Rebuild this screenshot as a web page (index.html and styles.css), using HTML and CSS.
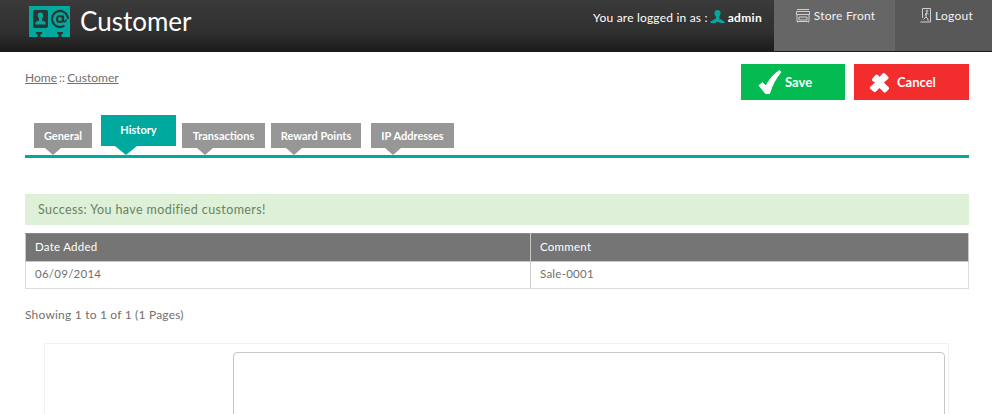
FILE: index.html
```html
<!DOCTYPE html>
<html lang="en">
<head>
<meta charset="utf-8">
<title>Customer</title>
<link rel="stylesheet" href="styles.css">
</head>
<body>
<header class="topbar">
  <div class="brand">
    <svg class="brand-icon" width="41" height="31" viewBox="0 0 41 31">
      <rect width="41" height="31" fill="#00a99d"/>
      <rect x="4" y="4" width="15" height="18" rx="2" fill="#2d3434"/>
      <path d="M11.500 6.500a2.700 2.700 0 0 1 2.700 2.700c0 1.500-.7 2.600-1.200 3.200v1.800c0 .6 3.500 1 3.500 2.600v1.700H6.500v-1.700c0-1.600 3.500-2 3.500-2.600v-1.800c-.5-.6-1.200-1.700-1.200-3.200a2.700 2.700 0 0 1 2.700-2.700z" fill="#00a99d"/>
      <circle cx="31" cy="13" r="8" fill="none" stroke="#2d3434" stroke-width="2.200" stroke-dasharray="40 8" transform="rotate(70 31 13)"/>
      <circle cx="31" cy="13" r="3" fill="none" stroke="#2d3434" stroke-width="2"/>
      <path d="M34.200 9.500v4.600c0 2 2.800 2 2.800-.6" fill="none" stroke="#2d3434" stroke-width="1.800"/>
      <path d="M7 26h6v2h-1.500v3h-3v-3H7zM28 26h6v2h-1.500v3h-3v-3H28z" fill="#2d3434"/>
    </svg>
    <h1 class="brand-title">Customer</h1>
  </div>
  <div class="userbar">
    <span class="logged">You are logged in as :</span>
    <svg class="user-icon" width="15" height="14" viewBox="0 0 15 14">
      <path d="M7.500 0a3 3 0 0 1 3 3.200c0 1.600-.9 3-1.500 3.500v1.600c1.500.9 3.600 2.400 5.600 3.200v1.500h-4.400L7.500 11.800l-2.700 1.200H.4v-1.500c2-.8 4.100-2.300 5.600-3.200V6.700c-.6-.5-1.500-1.900-1.500-3.500A3 3 0 0 1 7.500 0z" fill="#00a99d"/>
    </svg>
    <span class="username">admin</span>
  </div>
  <a class="navlink navlink-store" href="#">
    <svg width="14" height="15" viewBox="0 0 14 15" fill="none" stroke="#d0d0d0" stroke-width="1">
      <path d="M1 1.500h12M.5 3.500h13v3H.5zM1 6.500v7h12v-7M3 9h8v3H3zM1.500 13.500v1M12.500 13.500v1"/>
    </svg>
    Store Front
  </a>
  <a class="navlink navlink-logout" href="#">
    <svg width="11" height="15" viewBox="0 0 11 15" fill="none" stroke="#d0d0d0" stroke-width="1">
      <path d="M2.500 10V.5h8v13.500H.5M5 7.500l1.500-3 2 1.500M6.500 4.500L6 9l-2.500 2.500M6 9l2 2v2"/>
      <circle cx="7" cy="2.800" r=".8"/>
    </svg>
    Logout
  </a>
</header>

<main class="content">
  <div class="toprow">
    <nav class="crumbs"><a href="#">Home</a> :: <a href="#">Customer</a></nav>
    <div class="actions">
      <a class="btn btn-save" href="#">
        <svg width="24" height="24" viewBox="0 0 24 24"><path d="M1 15.500l3.500-3 3.500 3.500C11 10 15.500 4 21.500 0.500L23 2C18 8 14 15 11.500 23.500H7.500z" fill="#fff" stroke="#fff" stroke-linejoin="round"/></svg>
        Save
      </a>
      <a class="btn btn-cancel" href="#">
        <svg width="21" height="21" viewBox="0 0 21 21"><path d="M3.500 6.500l3-3.500a1.800 1.800 0 0 1 2.500 0l1.500 2 3-3.500a1.800 1.800 0 0 1 2.500 0l3 3a1.800 1.800 0 0 1 0 2.500L15 10.500l4.500 4.500a1.800 1.800 0 0 1 0 2.500l-2.500 2.500a1.800 1.800 0 0 1-2.500 0l-4-4-3.500 3.500a1.800 1.800 0 0 1-2.500 0L1.500 17a1.800 1.800 0 0 1 0-2.500L6 10.500 3.500 9a1.800 1.800 0 0 1 0-2.500z" fill="#fff"/></svg>
        Cancel
      </a>
    </div>
  </div>

  <div class="tabs">
    <a class="tab tab-general" href="#">General</a>
    <a class="tab tab-active" href="#">History</a>
    <a class="tab tab-transactions" href="#">Transactions</a>
    <a class="tab tab-reward" href="#">Reward Points</a>
    <a class="tab tab-ip" href="#">IP Addresses</a>
  </div>

  <div class="alert">Success: You have modified customers!</div>

  <table class="history">
    <thead>
      <tr><th class="col-date">Date Added</th><th>Comment</th></tr>
    </thead>
    <tbody>
      <tr><td>06/09/2014</td><td>Sale-0001</td></tr>
    </tbody>
  </table>

  <p class="paging">Showing 1 to 1 of 1 (1 Pages)</p>

  <div class="panel">
    <textarea class="comment"></textarea>
  </div>
</main>
</body>
</html>
```
FILE: styles.css
```css
* { box-sizing: border-box; }
html, body { height: 414px; overflow: hidden; }
body {
  margin: 0;
  background: #fff;
  color: #707070;
  font-family: Lato, "Open Sans", sans-serif;
  font-size: 12px;
}
a { color: inherit; }

.topbar {
  display: flex;
  align-items: stretch;
  height: 52px;
  background: linear-gradient(#3a3a3a, #303030 60%, #1b1b1b);
  color: #fff;
}
.brand {
  display: flex;
  align-items: flex-start;
  padding: 6px 0 0 29px;
  gap: 10px;
}
.brand-icon { display: block; }
.brand-title {
  margin: 0;
  font-size: 26px;
  line-height: 31px;
  font-weight: 400;
}
.userbar {
  margin-left: auto;
  display: flex;
  align-items: center;
  height: 34px;
  padding-right: 12px;
  font-size: 12px;
}
.logged { letter-spacing: .2px; }
.user-icon { margin: 0 3px 0 2px; }
.username { font-weight: 700; letter-spacing: .3px; }
.navlink {
  display: flex;
  align-items: flex-start;
  justify-content: center;
  gap: 4px;
  padding-top: 8px;
  line-height: 15px;
  height: 51px;
  text-decoration: none;
  color: #f2f2f2;
  font-size: 12px;
  letter-spacing: .25px;
}
.navlink-store { width: 121px; padding-left: 2px; background: #666; }
.navlink-logout { width: 97px; padding-left: 6px; background: #585858; }

.content { padding: 0 23px 0 25px; }
.toprow {
  display: flex;
  justify-content: space-between;
  align-items: flex-start;
  padding-top: 12px;
}
.crumbs { padding-top: 6px; line-height: 15px; font-size: 12px; word-spacing: -1px; }
.actions { display: flex; gap: 9px; }
.btn {
  display: flex;
  align-items: center;
  height: 36px;
  color: #fff;
  font-size: 13px;
  font-weight: 700;
  text-decoration: none;
}
.btn-save { width: 104px; padding-left: 17px; gap: 3px; background: #03bb50; }
.btn-cancel { width: 115px; padding-left: 15px; gap: 7px; background: #f32c2e; }

.tabs {
  display: flex;
  align-items: flex-start;
  height: 43px;
  margin-top: 15px;
  padding-left: 9px;
  border-bottom: 3px solid #00a99d;
}
.tab {
  position: relative;
  display: block;
  height: 25px;
  margin-top: 8px;
  background: #979797;
  color: #fff;
  font-size: 11px;
  font-weight: 700;
  line-height: 25px;
  text-align: center;
  text-decoration: none;
}
.tab::after {
  content: "";
  position: absolute;
  left: 15px;
  top: 25px;
  border-style: solid;
  border-width: 7px 8px 0 8px;
  border-color: #979797 transparent transparent transparent;
}
.tab-general { width: 58px; }
.tab-general::after { left: 11px; }
.tab-active {
  width: 75px;
  height: 31px;
  margin: 0 6px 0 9px;
  background: #00a99d;
  line-height: 29px;
}
.tab-active::after {
  left: 14px;
  top: 31px;
  border-width: 9px 11px 0 11px;
  border-top-color: #00a99d;
}
.tab-transactions { width: 83px; margin-right: 6px; }
.tab-reward { width: 90px; margin-right: 10px; }
.tab-ip { width: 83px; }
.tab-ip::after { left: 14px; }

.alert {
  margin-top: 36px;
  height: 31px;
  padding-left: 13px;
  background: #dff0d8;
  color: #66835f;
  font-size: 12.500px;
  line-height: 31px;
  letter-spacing: .4px;
}
.history {
  width: 100%;
  margin-top: 8px;
  border-collapse: collapse;
  table-layout: fixed;
  font-size: 11.500px;
}
.history th, .history td {
  text-align: left;
  padding: 0 9px 3px;
  border: 1px solid #ddd;
  letter-spacing: .25px;
}
.history th {
  height: 28px;
  background: #757575;
  border-color: #c8c8c8;
  border-top-color: #8a8a8a;
  color: #fff;
  font-weight: 400;
}
.history td { height: 27px; color: #707070; }
.history .col-date, .history td:first-child { border-right-color: #c8c8c8; }
.col-date { width: 505px; }

.paging {
  margin: 18px 0 0;
  line-height: 15px;
  font-size: 12px;
  letter-spacing: .2px;
}
.panel {
  margin: 21px 20px 0 19px;
  height: 80px;
  padding: 8px 3px 0 188px;
  border: 1px solid #f1f1f1;
}
.comment {
  display: block;
  width: 100%;
  height: 90px;
  border: 1px solid #c6c6c6;
  border-radius: 4px;
  background: #fff;
  resize: none;
}
```
